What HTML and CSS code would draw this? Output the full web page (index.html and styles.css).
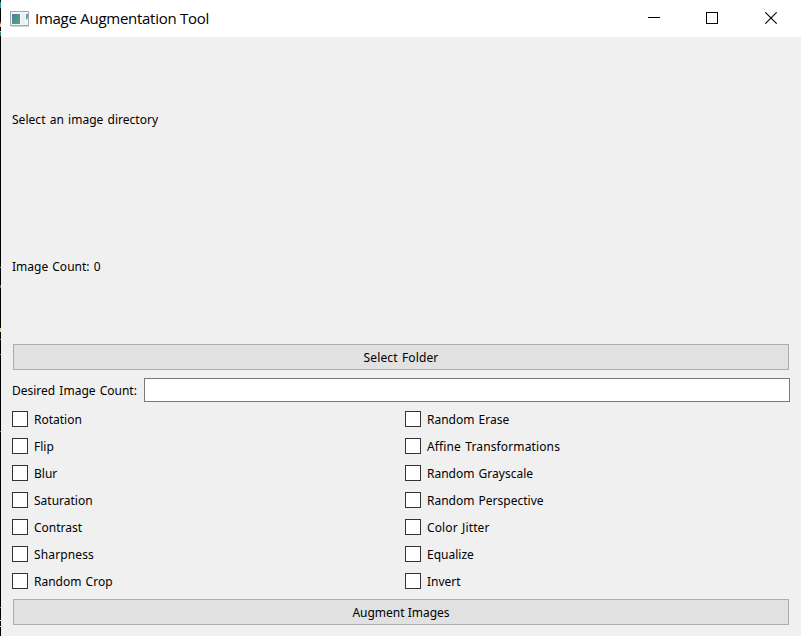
FILE: index.html
```html
<!DOCTYPE html>
<html lang="en">
<head>
<meta charset="utf-8">
<title>Image Augmentation Tool</title>
<link rel="stylesheet" href="styles.css">
</head>
<body>
<div class="window">
  <header class="titlebar">
    <svg class="app-icon" width="20" height="16" viewBox="0 0 20 16">
      <defs>
        <linearGradient id="pane" x1="0" y1="0" x2="1" y2="1"><stop offset="0" stop-color="#4a7fa5"/><stop offset="1" stop-color="#55a673"/></linearGradient>
      </defs>
      <rect x=".5" y=".5" width="18" height="14" fill="#f4f6f7" stroke="#a2a8ae"/>
      <path d="M1 15.5h18" stroke="#d5d8db"/>
      <rect x="2" y="3" width="8" height="10" fill="url(#pane)"/>
      <path d="M11 3h4v10h-4z" fill="#e9eef0"/>
      <path d="M16 3h2v4l-2 2z" fill="#5d9fae"/>
    </svg>
    <h1 class="title">Image Augmentation Tool</h1>
    <div class="controls">
      <svg width="12" height="12" viewBox="0 0 12 12"><path d="M0 5.5h12" stroke="#000"/></svg>
      <svg width="12" height="12" viewBox="0 0 12 12"><rect x=".5" y=".5" width="11" height="11" fill="none" stroke="#000"/></svg>
      <svg width="12" height="12" viewBox="0 0 12 12"><path d="M.3.3l11.4 11.4M11.7.3L.3 11.7" stroke="#000" stroke-width="1.1"/></svg>
    </div>
  </header>
  <main class="content">
    <p class="label message">Select an image directory</p>
    <p class="label count">Image Count: 0</p>
    <button class="button wide">Select Folder</button>
    <div class="field">
      <label class="label" for="desired">Desired Image Count:</label>
      <input id="desired" class="input" type="text">
    </div>
    <div class="options">
      <label class="option"><input type="checkbox">Rotation</label>
      <label class="option"><input type="checkbox">Random Erase</label>
      <label class="option"><input type="checkbox">Flip</label>
      <label class="option wide"><input type="checkbox">Affine Transformations</label>
      <label class="option"><input type="checkbox">Blur</label>
      <label class="option"><input type="checkbox">Random Grayscale</label>
      <label class="option"><input type="checkbox">Saturation</label>
      <label class="option"><input type="checkbox">Random Perspective</label>
      <label class="option"><input type="checkbox">Contrast</label>
      <label class="option wide"><input type="checkbox">Color Jitter</label>
      <label class="option wide"><input type="checkbox">Sharpness</label>
      <label class="option"><input type="checkbox">Equalize</label>
      <label class="option"><input type="checkbox">Random Crop</label>
      <label class="option"><input type="checkbox">Invert</label>
    </div>
    <button class="button">Augment Images</button>
  </main>
</div>
</body>
</html>
```
FILE: styles.css
```css
* { box-sizing: border-box; }
body {
  margin: 0;
  height: 636px;
  overflow: hidden;
  padding-left: 1px;
  background: linear-gradient(#000 0 2px, #1c9c92 2px 8px, #000 8px 22px, #b5525a 22px 24px, #d8d49a 24px 27px, #000 27px 31px, #d8d49a 31px 32px, #2c8c88 32px 36px, #000 36px 267px, #b99b35 267px 268px, #000 268px 285px, #7c4f9b 285px 288px, #000 288px 328px, #d8d49a 328px 332px, #000 332px 339px, #d27a20 339px 340px, #000 340px 354px, #9b6a9b 354px 355px, #000 355px 431px, #9b6a9b 431px 432px, #000 432px 607px, #5a8a9b 607px 608px, #000 608px 620px, #ddd 620px 621px, #000 621px 626px, #ddd 626px 627px, #000 627px);
  font-family: "Noto Sans", sans-serif;
  font-size: 12px;
  color: #000;
}
.window { height: 636px; display: flex; flex-direction: column; background: #f0f0f0; }
.titlebar { height: 37px; display: flex; align-items: center; background: #fff; padding: 0 24px 0 9px; }
.app-icon { margin-right: 5px; }
.title { margin: 0; padding-bottom: 2px; font: 400 15px/20px "Open Sans", sans-serif; letter-spacing: -0.27px; }
.controls { display: flex; gap: 47px; margin-left: auto; padding-bottom: 1px; }
.controls svg { display: block; }
.controls svg:first-child { margin-right: -1px; }
.content { flex: 1; display: flex; flex-direction: column; padding: 9px 11px 11px; }
.label { margin: 0; display: flex; align-items: center; white-space: nowrap; word-spacing: 1px; }
.message, .count { height: 147px; }
.message { letter-spacing: 0.03px; }
.count { margin-bottom: 4px; }
.button {
  height: 26px;
  margin: 0 1px;
  padding: 0;
  flex: none;
  border: 1px solid #adadad;
  background: #e1e1e1;
  color: #000;
  font: inherit;
}
.wide { letter-spacing: 0.13px; word-spacing: 1px; }
.field { display: flex; height: 24px; margin-top: 8px; gap: 7px; }
.field .label { width: 125px; }
.input { flex: 1; min-width: 0; height: 24px; border: 1px solid #7a7a7a; background: #fff; padding: 0 4px; font: inherit; }
.options { display: grid; grid-template-columns: 387px 1fr; column-gap: 6px; grid-auto-rows: 27px; margin: 4px 0; }
.option { display: flex; align-items: center; gap: 6px; white-space: nowrap; word-spacing: 1px; }
.option input { appearance: none; width: 16px; height: 16px; margin: 0 0 2px; border: 1px solid #333; background: #fff; }
```
